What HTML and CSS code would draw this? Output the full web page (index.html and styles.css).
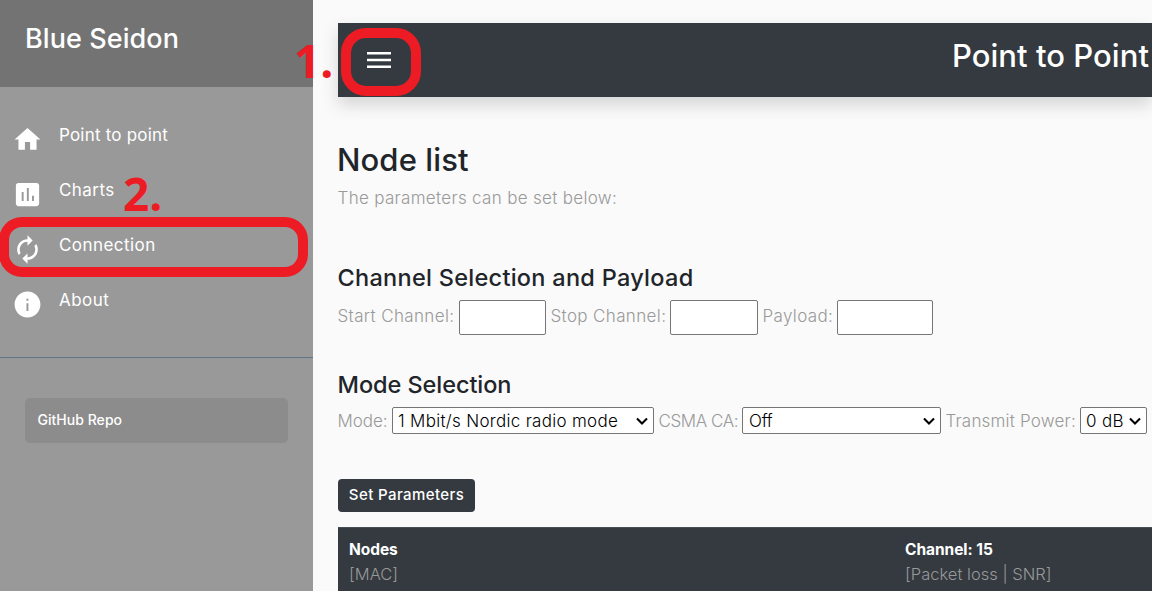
FILE: index.html
```
<!DOCTYPE html>
<html lang="en">
<head>
<meta charset="utf-8">
<title>Blue Seidon</title>
<link rel="stylesheet" href="styles.css">
</head>
<body>
<div class="app">
  <aside class="sidebar">
    <header class="brand">Blue Seidon</header>
    <nav class="menu">
      <a class="item home"><svg class="icon" viewBox="0 0 24 24"><path d="M10 20v-6h4v6h5v-8h3L12 3 2 12h3v8z"/></svg><span>Point to point</span></a>
      <a class="item"><svg class="icon" viewBox="0 0 24 24"><path d="M19 3H5c-1.100 0-2 .9-2 2v14c0 1.100.9 2 2 2h14c1.100 0 2-.9 2-2V5c0-1.100-.9-2-2-2zM9 17H7.500V10H9v7zm4 0h-1.500V7H13v10zm4 0h-1.500v-4H17v4z"/></svg><span>Charts</span></a>
      <a class="item"><svg class="icon" viewBox="0 0 24 24"><path d="M12 6v3l4-4-4-4v3c-4.420 0-8 3.580-8 8 0 1.570.46 3.030 1.240 4.260L6.700 14.800C6.250 13.970 6 13.010 6 12c0-3.310 2.690-6 6-6zm6.760 1.740L17.300 9.200c.44.84.7 1.790.7 2.800 0 3.310-2.690 6-6 6v-3l-4 4 4 4v-3c4.420 0 8-3.580 8-8 0-1.570-.46-3.030-1.240-4.260z"/></svg><span>Connection</span></a>
      <a class="item"><svg class="icon" viewBox="0 0 24 24"><path d="M12 2C6.480 2 2 6.480 2 12s4.480 10 10 10 10-4.480 10-10S17.520 2 12 2zm.7 15h-1.500v-6h1.500v6zm0-8h-1.500V7.500h1.500v1.500z"/></svg><span>About</span></a>
    </nav>
    <a class="repo">GitHub Repo</a>
  </aside>
  <main class="content">
    <header class="navbar">
      <svg class="burger" viewBox="0 0 24 16"><path d="M0 0h24v2.600H0zM0 6.700h24v2.600H0zM0 13.400h24V16H0z"/></svg>
      <span>Point to Point</span>
    </header>
    <h2 class="title">Node list</h2>
    <p class="lead">The parameters can be set below:</p>
    <h4 class="heading">Channel Selection and Payload</h4>
    <div class="row channels">
      <label>Start Channel:</label><input type="text">
      <label>Stop Channel:</label><input type="text">
      <label>Payload:</label><input type="text">
    </div>
    <h4 class="heading second">Mode Selection</h4>
    <div class="row modes">
      <label class="mode">Mode:</label>
      <div class="select"><select><option>1 Mbit/s Nordic radio mode</option></select><svg class="chevron" viewBox="0 0 12 8"><path d="M1 1.500l5 5 5-5"/></svg></div>
      <label class="csma">CSMA CA:</label>
      <div class="select off"><select><option>Off</option></select><svg class="chevron" viewBox="0 0 12 8"><path d="M1 1.500l5 5 5-5"/></svg></div>
      <label class="power">Transmit Power:</label>
      <div class="select"><select><option>0 dB</option></select><svg class="chevron" viewBox="0 0 12 8"><path d="M1 1.500l5 5 5-5"/></svg></div>
    </div>
    <button class="set">Set Parameters</button>
    <div class="table">
      <div class="cell"><b>Nodes</b><span>[MAC]</span></div>
      <div class="cell"><b>Channel: 15</b><span>[Packet loss | SNR]</span></div>
    </div>
  </main>
  <div class="ring ring-menu"></div>
  <div class="ring ring-connection"></div>
  <div class="step step-one">1.</div>
  <div class="step step-two">2.</div>
</div>
</body>
</html>
```
FILE: styles.css
```
* { box-sizing: border-box; }
body { margin: 0; background: #fafafa; font-family: Inter, "Open Sans", sans-serif; }
.app { display: flex; position: relative; width: 1152px; height: 591px; overflow: hidden; white-space: nowrap; }
.sidebar { flex: none; width: 313px; background: #999; color: #fff; }
.brand { height: 87px; padding: 21px 25px; background: #737373; font-size: 27px; line-height: 36px; font-weight: 500; letter-spacing: .07px; }
.menu { padding: 20px 0 30px; border-bottom: 1px solid #5f7486; }
.item { display: flex; gap: 17px; height: 55px; padding-left: 12px; font-size: 17px; line-height: 57px; letter-spacing: .44px; }
.home { letter-spacing: .2px; }
.icon { width: 31px; height: 31px; margin: 16.500px -1px 0 0; fill: #fff; }
.repo { display: block; height: 45px; margin: 40px 25px 0; padding-left: 12.500px; border-radius: 5px; background: #8c8c8c; font-size: 14px; font-weight: 500; line-height: 43px; letter-spacing: .03px; }
.content { flex: none; width: 839px; padding: 23px 0 0 25px; color: #212529; }
.navbar { display: flex; justify-content: space-between; height: 74px; padding: 0 3px 0 29px; background: #343a40; color: #fff; font-size: 31px; font-weight: 500; line-height: 65px; letter-spacing: .05px; box-shadow: 0 8px 16px rgba(0,0,0,.15); }
.burger { width: 24px; height: 16px; margin-top: 29px; fill: #fff; }
.title { margin: 44px 0 0 -1px; font-size: 31px; font-weight: 450; line-height: 38px; letter-spacing: .1px; }
.lead { margin: 6px 0 0 -.5px; font-size: 17px; font-weight: 300; line-height: 27px; letter-spacing: .32px; color: #999; }
.heading { margin: 51px 0 0 -.5px; font-size: 23.500px; font-weight: 450; line-height: 30px; letter-spacing: .28px; }
.second { margin-top: 35px; letter-spacing: -.06px; }
.row { display: grid; color: #999; font-size: 17px; font-weight: 350; letter-spacing: .36px; }
.row > label { text-indent: -.5px; }
.row > * ~ label { padding-left: 5px; }
.channels { grid-template-columns: 121px 87px 124px 88px 79px 96px; height: 35px; margin-top: 7px; line-height: 33px; }
.channels input { width: 100%; min-width: 0; height: 35px; border: 1px solid #767676; border-radius: 2px; background: #fff; }
.modes { grid-template-columns: 54px 262px 88px 199px 139px 67px; height: 27px; margin-top: 7px; line-height: 28px; }
.modes .mode { letter-spacing: -.05px; }
.modes .csma { letter-spacing: -.42px; }
.modes .power { letter-spacing: .2px; }
.select { position: relative; }
.select select { display: block; appearance: none; width: 100%; height: 27px; padding: 1px 0 0 5px; border: 1px solid #767676; border-radius: 2px; background: #fff; color: #000; font: 350 17px Inter, sans-serif; letter-spacing: .3px; }
.off select { letter-spacing: -.2px; padding-left: 6px; }
.chevron { position: absolute; right: 6px; top: 10px; width: 12px; height: 8px; fill: none; stroke: #000; stroke-width: 2.100; pointer-events: none; }
.set { display: block; width: 137px; height: 33px; margin-top: 45px; padding: 0 0 2px; border: 0; border-radius: 4px; background: #343a40; color: #fff; font: 450 15px Inter, sans-serif; letter-spacing: .4px; }
.table { display: grid; grid-template-columns: 556px 1fr; height: 64px; margin-top: 15px; padding: 10px 11px 0; border-top: 1px solid #454d55; background: #343a40; color: #fff; }
.cell { display: flex; flex-direction: column; font-size: 15.500px; line-height: 24px; letter-spacing: -.05px; }
.cell span { color: #999; font-size: 16.500px; font-weight: 300; line-height: 25px; letter-spacing: .02px; }
.ring { position: absolute; border: 10px solid #ed1c24; }
.ring-menu { left: 341px; top: 28px; width: 80px; height: 68px; border-radius: 25px; }
.ring-connection { left: -1px; top: 217px; width: 309px; height: 60px; border-radius: 23px; }
.step { position: absolute; color: #ed1c24; font: 700 46px/50px "Open Sans", sans-serif; }
.step-one { left: 294px; top: 35px; }
.step-two { left: 123px; top: 168px; }
```
